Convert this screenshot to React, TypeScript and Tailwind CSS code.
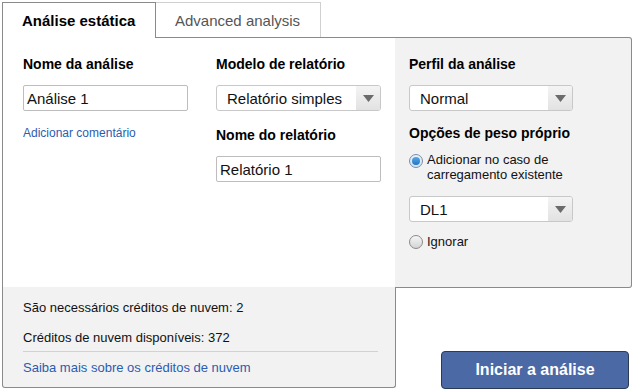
import React from "react";

function Select({ value, width }: { value: string; width: string }) {
  return (
    <div className={`flex h-[26px] ${width} items-stretch overflow-hidden rounded-[3px] border border-[#c8c8c8] bg-white`}>
      <div className="flex flex-1 items-center pl-[10px] text-[15px] leading-[17px] text-[#111]">{value}</div>
      <div className="flex w-[24px] items-center justify-center bg-gradient-to-b from-[#f4f4f4] to-[#e2e2e2]">
        <svg width="11" height="7" viewBox="0 0 11 7">
          <path d="M0 0 L11 0 L5.5 7 Z" fill="#6b6b6b" />
        </svg>
      </div>
    </div>
  );
}

function Input({ value }: { value: string }) {
  return (
    <div className="flex h-[26px] w-[165px] items-center rounded-[2px] border border-[#bdbdbd] bg-white pl-[3px] text-[15px] leading-[17px] text-[#111]">
      {value}
    </div>
  );
}

function Radio({ checked }: { checked: boolean }) {
  return checked ? (
    <div className="flex h-[14px] w-[14px] shrink-0 items-center justify-center rounded-full border border-[#7a8ea6] bg-gradient-to-b from-[#e8f2fb] to-[#cfe3f5]">
      <div className="h-[8px] w-[8px] rounded-full bg-gradient-to-b from-[#5aa8e8] to-[#1f74c4]" />
    </div>
  ) : (
    <div className="h-[14px] w-[14px] shrink-0 rounded-full border border-[#8a8a8a] bg-gradient-to-b from-[#f6f6f6] to-[#d4d4d4]" />
  );
}

export default function App() {
  return (
    <div className="h-[389px] w-[636px] overflow-hidden bg-white pl-[2px] pt-[2px] font-['Liberation_Sans',Arial,sans-serif] text-black">
      {/* Tabs */}
      <div className="flex h-[35px]">
        <div className="relative z-10 -mb-px flex h-[36px] w-[154px] items-center border-l border-r border-t border-[#8a8a8a] bg-white pl-[19px] text-[15px] font-bold leading-[17px]">
          Análise estática
        </div>
        <div className="flex h-[35px] w-[165px] items-center border-r border-t border-[#d0d0d0] bg-white pl-[19px] text-[15px] leading-[17px] text-[#555]">
          Advanced analysis
        </div>
      </div>

      <div className="flex">
        {/* Left column */}
        <div className="flex w-[393px] flex-col">
          <div className="flex h-[250px] gap-[28px] border-l border-t border-[#8a8a8a] bg-white pl-[20px] pt-[18px]">
            <div className="flex w-[165px] flex-col">
              <div className="text-[14px] font-bold leading-[16px]">Nome da análise</div>
              <div className="mt-[13px]">
                <Input value="Análise 1" />
              </div>
              <div className="mt-[15px] text-[12px] leading-[14px] text-[#2b5cb0]">Adicionar comentário</div>
            </div>
            <div className="flex w-[165px] flex-col">
              <div className="text-[14px] font-bold leading-[16px]">Modelo de relatório</div>
              <div className="mt-[13px]">
                <Select value="Relatório simples" width="w-[165px]" />
              </div>
              <div className="mt-[16px] text-[14px] font-bold leading-[16px]">Nome do relatório</div>
              <div className="mt-[13px]">
                <Input value="Relatório 1" />
              </div>
            </div>
          </div>
          <div className="relative h-[101px] w-[394px] rounded-b-[3px] border-b border-l border-r border-[#8a8a8a] bg-[#f2f2f2] pl-[20px] pr-[17px] pt-[13px] text-[13px] leading-[15px] text-[#111]">
            <div>São necessários créditos de nuvem: 2</div>
            <div className="mt-[15px]">Créditos de nuvem disponíveis: 372</div>
            <div className="mt-[6px] h-px bg-[#d2d2d2]" />
            <div className="mt-[8px] text-[#2b5cb0]">Saiba mais sobre os créditos de nuvem</div>
          </div>
        </div>

        {/* Right column */}
        <div className="flex w-[237px] flex-col">
          <div className="flex h-[251px] flex-col rounded-r-[3px] border-b border-r border-t border-[#8a8a8a] bg-[#f2f2f2] pl-[14px] pt-[18px]">
            <div className="text-[14px] font-bold leading-[16px]">Perfil da análise</div>
            <div className="mt-[13px]">
              <Select value="Normal" width="w-[164px]" />
            </div>
            <div className="mt-[14px] text-[14px] font-bold leading-[16px]">Opções de peso próprio</div>
            <div className="mt-[11px] flex items-start gap-[4px]">
              <div className="mt-[2px]">
                <Radio checked />
              </div>
              <div className="text-[13px] leading-[15px] text-[#111]">
                Adicionar no caso de
                <br />
                carregamento existente
              </div>
            </div>
            <div className="mt-[14px]">
              <Select value="DL1" width="w-[164px]" />
            </div>
            <div className="mt-[12px] flex items-center gap-[4px]">
              <Radio checked={false} />
              <div className="text-[13px] leading-[15px] text-[#111]">Ignorar</div>
            </div>
          </div>
          <div className="ml-[46px] mt-[63px] flex h-[38px] w-[188px] items-center justify-center rounded-[4px] border border-[#2b3a57] bg-[#4a69a5] text-[16px] font-bold leading-[18px] text-white">
            Iniciar a análise
          </div>
        </div>
      </div>
    </div>
  );
}
